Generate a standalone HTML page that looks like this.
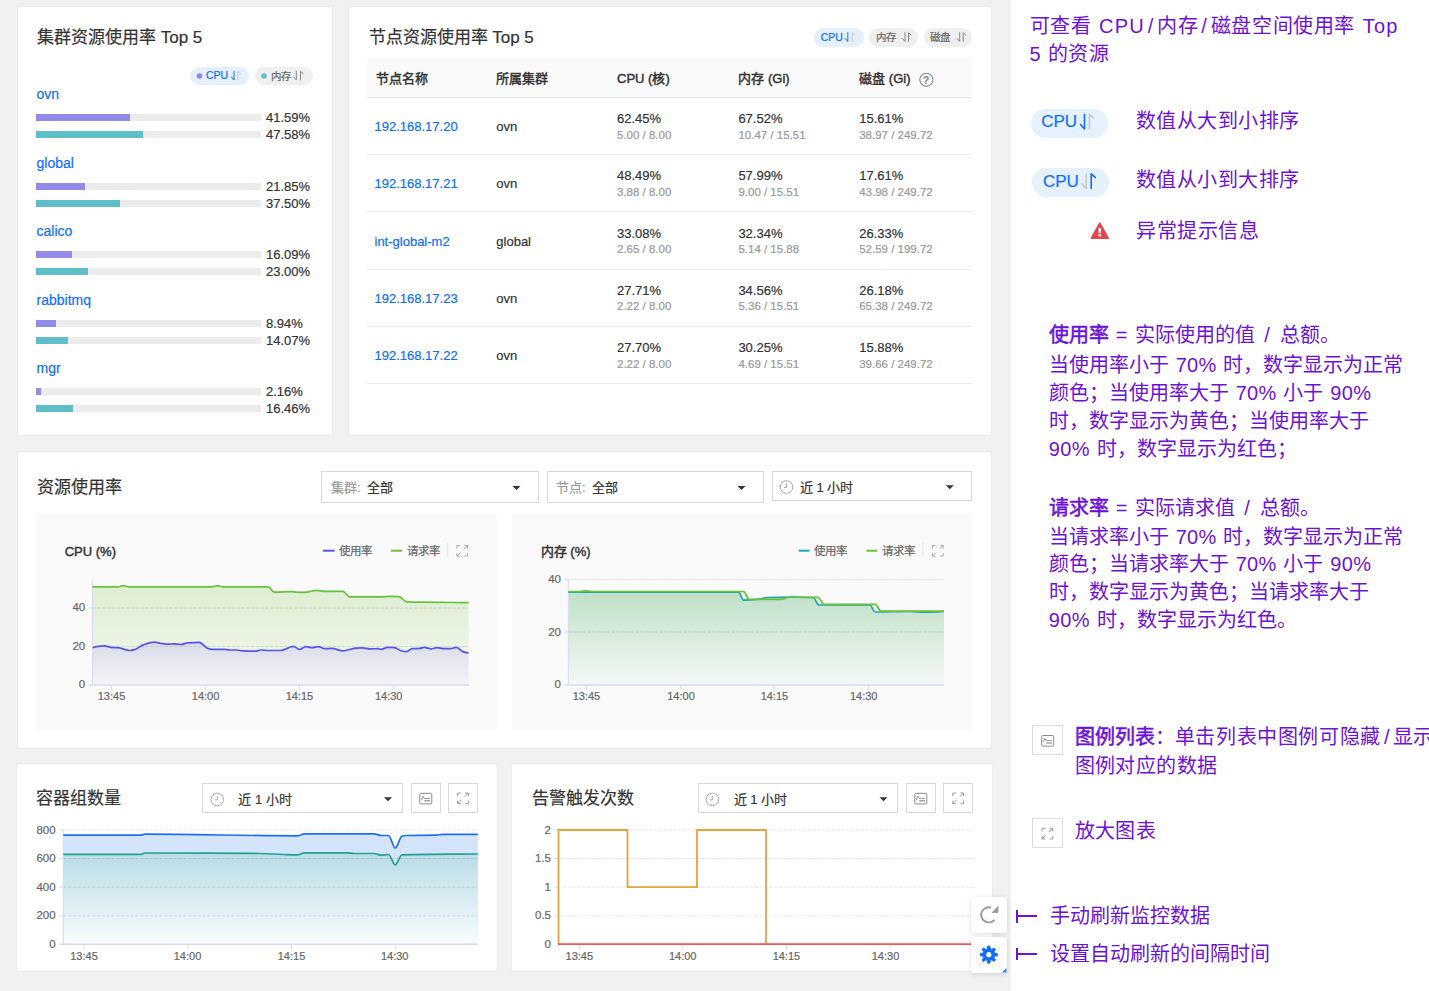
<!DOCTYPE html><html lang="zh-CN"><head><meta charset="utf-8"><style>
html,body{margin:0;padding:0;}
body{width:1429px;height:991px;overflow:hidden;position:relative;background:#f1f1f1;font-family:"Liberation Sans",sans-serif;}
.t{position:absolute;white-space:nowrap;-webkit-text-stroke:0.2px currentColor;}
.r{position:absolute;box-sizing:border-box;}
svg.ov{position:absolute;left:0;top:0;}
b{font-weight:normal;-webkit-text-stroke:0.55px currentColor;}
.l{letter-spacing:0.3px;word-spacing:1px;}
</style></head><body>

<div class="r" style="left:1011px;top:0px;width:418px;height:991px;background:#fff;"></div>
<div class="r" style="left:17px;top:6px;width:316px;height:430px;background:#fff;border:1px solid #eaeaea"></div>
<div class="r" style="left:348px;top:6px;width:644px;height:430px;background:#fff;border:1px solid #eaeaea"></div>
<div class="r" style="left:17px;top:451px;width:975px;height:298px;background:#fff;border:1px solid #eaeaea"></div>
<div class="r" style="left:16px;top:763px;width:482px;height:209px;background:#fff;border:1px solid #eaeaea"></div>
<div class="r" style="left:511px;top:763px;width:482px;height:209px;background:#fff;border:1px solid #eaeaea"></div>
<div class="t" style="left:37px;top:28.7px;font-size:17px;line-height:17px;color:#333;font-weight:normal;">集群资源使用率 Top 5</div>
<div class="r" style="left:190px;top:67px;width:59px;height:18px;background:#e6f0fd;border-radius:9px"></div>
<div class="t" style="left:206px;top:69.8px;font-size:10.5px;line-height:10.5px;color:#0f6ef5;font-weight:normal;">CPU</div>
<div class="r" style="left:255px;top:67px;width:58px;height:18px;background:#efefef;border-radius:9px"></div>
<div class="t" style="left:270.8px;top:70.5px;font-size:10.5px;line-height:10.5px;color:#666;font-weight:normal;">内存</div>
<div class="t" style="left:36.5px;top:87.2px;font-size:14px;line-height:14px;color:#0f6ef5;font-weight:normal;">ovn</div>
<div class="r" style="left:36px;top:114.0px;width:225px;height:7px;background:#ececec;"></div>
<div class="r" style="left:36px;top:114.0px;width:93.5775px;height:7px;background:#9289e9;"></div>
<div class="t" style="left:266px;top:111.0px;font-size:13px;line-height:13px;color:#333;font-weight:normal;">41.59%</div>
<div class="r" style="left:36px;top:131.0px;width:225px;height:7px;background:#ececec;"></div>
<div class="r" style="left:36px;top:131.0px;width:107.055px;height:7px;background:#5fbfc8;"></div>
<div class="t" style="left:266px;top:128.0px;font-size:13px;line-height:13px;color:#333;font-weight:normal;">47.58%</div>
<div class="t" style="left:36.5px;top:155.7px;font-size:14px;line-height:14px;color:#0f6ef5;font-weight:normal;">global</div>
<div class="r" style="left:36px;top:182.5px;width:225px;height:7px;background:#ececec;"></div>
<div class="r" style="left:36px;top:182.5px;width:49.1625px;height:7px;background:#9289e9;"></div>
<div class="t" style="left:266px;top:179.5px;font-size:13px;line-height:13px;color:#333;font-weight:normal;">21.85%</div>
<div class="r" style="left:36px;top:199.5px;width:225px;height:7px;background:#ececec;"></div>
<div class="r" style="left:36px;top:199.5px;width:84.375px;height:7px;background:#5fbfc8;"></div>
<div class="t" style="left:266px;top:196.5px;font-size:13px;line-height:13px;color:#333;font-weight:normal;">37.50%</div>
<div class="t" style="left:36.5px;top:224.2px;font-size:14px;line-height:14px;color:#0f6ef5;font-weight:normal;">calico</div>
<div class="r" style="left:36px;top:251.0px;width:225px;height:7px;background:#ececec;"></div>
<div class="r" style="left:36px;top:251.0px;width:36.2025px;height:7px;background:#9289e9;"></div>
<div class="t" style="left:266px;top:248.0px;font-size:13px;line-height:13px;color:#333;font-weight:normal;">16.09%</div>
<div class="r" style="left:36px;top:268.0px;width:225px;height:7px;background:#ececec;"></div>
<div class="r" style="left:36px;top:268.0px;width:51.75px;height:7px;background:#5fbfc8;"></div>
<div class="t" style="left:266px;top:265.0px;font-size:13px;line-height:13px;color:#333;font-weight:normal;">23.00%</div>
<div class="t" style="left:36.5px;top:292.7px;font-size:14px;line-height:14px;color:#0f6ef5;font-weight:normal;">rabbitmq</div>
<div class="r" style="left:36px;top:319.5px;width:225px;height:7px;background:#ececec;"></div>
<div class="r" style="left:36px;top:319.5px;width:20.115px;height:7px;background:#9289e9;"></div>
<div class="t" style="left:266px;top:316.5px;font-size:13px;line-height:13px;color:#333;font-weight:normal;">8.94%</div>
<div class="r" style="left:36px;top:336.5px;width:225px;height:7px;background:#ececec;"></div>
<div class="r" style="left:36px;top:336.5px;width:31.6575px;height:7px;background:#5fbfc8;"></div>
<div class="t" style="left:266px;top:333.5px;font-size:13px;line-height:13px;color:#333;font-weight:normal;">14.07%</div>
<div class="t" style="left:36.5px;top:361.2px;font-size:14px;line-height:14px;color:#0f6ef5;font-weight:normal;">mgr</div>
<div class="r" style="left:36px;top:388.0px;width:225px;height:7px;background:#ececec;"></div>
<div class="r" style="left:36px;top:388.0px;width:4.86px;height:7px;background:#9289e9;"></div>
<div class="t" style="left:266px;top:385.0px;font-size:13px;line-height:13px;color:#333;font-weight:normal;">2.16%</div>
<div class="r" style="left:36px;top:405.0px;width:225px;height:7px;background:#ececec;"></div>
<div class="r" style="left:36px;top:405.0px;width:37.035px;height:7px;background:#5fbfc8;"></div>
<div class="t" style="left:266px;top:402.0px;font-size:13px;line-height:13px;color:#333;font-weight:normal;">16.46%</div>
<div class="t" style="left:368.5px;top:28.7px;font-size:17px;line-height:17px;color:#333;font-weight:normal;">节点资源使用率 Top 5</div>
<div class="r" style="left:814px;top:28.3px;width:49.5px;height:18.7px;background:#e6f0fd;border-radius:9.5px"></div>
<div class="t" style="left:820.7px;top:31.5px;font-size:10.5px;line-height:10.5px;color:#0f6ef5;font-weight:normal;">CPU</div>
<div class="r" style="left:869.2px;top:28.3px;width:48.5px;height:18.7px;background:#efefef;border-radius:9.5px"></div>
<div class="t" style="left:876px;top:32px;font-size:10.5px;line-height:10.5px;color:#666;font-weight:normal;">内存</div>
<div class="r" style="left:923.7px;top:28.3px;width:48.5px;height:18.7px;background:#efefef;border-radius:9.5px"></div>
<div class="t" style="left:930.2px;top:32px;font-size:10.5px;line-height:10.5px;color:#666;font-weight:normal;">磁盘</div>
<div class="r" style="left:367px;top:58px;width:605px;height:40px;background:#fafafa;border-bottom:1px solid #e8e8e8"></div>
<div class="t" style="left:375.5px;top:71.5px;font-size:13px;line-height:13px;color:#333;font-weight:normal;-webkit-text-stroke:0.45px #333">节点名称</div>
<div class="t" style="left:496.3px;top:71.5px;font-size:13px;line-height:13px;color:#333;font-weight:normal;-webkit-text-stroke:0.45px #333">所属集群</div>
<div class="t" style="left:617px;top:71.5px;font-size:13px;line-height:13px;color:#333;font-weight:normal;-webkit-text-stroke:0.45px #333">CPU (核)</div>
<div class="t" style="left:738.4px;top:71.5px;font-size:13px;line-height:13px;color:#333;font-weight:normal;-webkit-text-stroke:0.45px #333">内存 (Gi)</div>
<div class="t" style="left:859.2px;top:71.5px;font-size:13px;line-height:13px;color:#333;font-weight:normal;-webkit-text-stroke:0.45px #333">磁盘 (Gi)</div>
<div class="t" style="left:922.8px;top:74.5px;font-size:10.5px;line-height:10.5px;color:#888;font-weight:bold;">?</div>
<div class="t" style="left:374.5px;top:120.2px;font-size:13px;line-height:13px;color:#0f6ef5;font-weight:normal;">192.168.17.20</div>
<div class="t" style="left:496.3px;top:120.2px;font-size:13px;line-height:13px;color:#333;font-weight:normal;">ovn</div>
<div class="t" style="left:617px;top:112.0px;font-size:13px;line-height:13px;color:#333;font-weight:normal;">62.45%</div>
<div class="t" style="left:617px;top:129.5px;font-size:11.5px;line-height:11.5px;color:#999;font-weight:normal;">5.00 / 8.00</div>
<div class="t" style="left:738.4px;top:112.0px;font-size:13px;line-height:13px;color:#333;font-weight:normal;">67.52%</div>
<div class="t" style="left:738.4px;top:129.5px;font-size:11.5px;line-height:11.5px;color:#999;font-weight:normal;">10.47 / 15.51</div>
<div class="t" style="left:859.2px;top:112.0px;font-size:13px;line-height:13px;color:#333;font-weight:normal;">15.61%</div>
<div class="t" style="left:859.2px;top:129.5px;font-size:11.5px;line-height:11.5px;color:#999;font-weight:normal;">38.97 / 249.72</div>
<div class="r" style="left:367px;top:154.0px;width:605px;height:1px;background:#ebebeb;"></div>
<div class="t" style="left:374.5px;top:177.45px;font-size:13px;line-height:13px;color:#0f6ef5;font-weight:normal;">192.168.17.21</div>
<div class="t" style="left:496.3px;top:177.45px;font-size:13px;line-height:13px;color:#333;font-weight:normal;">ovn</div>
<div class="t" style="left:617px;top:169.25px;font-size:13px;line-height:13px;color:#333;font-weight:normal;">48.49%</div>
<div class="t" style="left:617px;top:186.75px;font-size:11.5px;line-height:11.5px;color:#999;font-weight:normal;">3.88 / 8.00</div>
<div class="t" style="left:738.4px;top:169.25px;font-size:13px;line-height:13px;color:#333;font-weight:normal;">57.99%</div>
<div class="t" style="left:738.4px;top:186.75px;font-size:11.5px;line-height:11.5px;color:#999;font-weight:normal;">9.00 / 15.51</div>
<div class="t" style="left:859.2px;top:169.25px;font-size:13px;line-height:13px;color:#333;font-weight:normal;">17.61%</div>
<div class="t" style="left:859.2px;top:186.75px;font-size:11.5px;line-height:11.5px;color:#999;font-weight:normal;">43.98 / 249.72</div>
<div class="r" style="left:367px;top:211.25px;width:605px;height:1px;background:#ebebeb;"></div>
<div class="t" style="left:374.5px;top:234.7px;font-size:13px;line-height:13px;color:#0f6ef5;font-weight:normal;">int-global-m2</div>
<div class="t" style="left:496.3px;top:234.7px;font-size:13px;line-height:13px;color:#333;font-weight:normal;">global</div>
<div class="t" style="left:617px;top:226.5px;font-size:13px;line-height:13px;color:#333;font-weight:normal;">33.08%</div>
<div class="t" style="left:617px;top:244.0px;font-size:11.5px;line-height:11.5px;color:#999;font-weight:normal;">2.65 / 8.00</div>
<div class="t" style="left:738.4px;top:226.5px;font-size:13px;line-height:13px;color:#333;font-weight:normal;">32.34%</div>
<div class="t" style="left:738.4px;top:244.0px;font-size:11.5px;line-height:11.5px;color:#999;font-weight:normal;">5.14 / 15.88</div>
<div class="t" style="left:859.2px;top:226.5px;font-size:13px;line-height:13px;color:#333;font-weight:normal;">26.33%</div>
<div class="t" style="left:859.2px;top:244.0px;font-size:11.5px;line-height:11.5px;color:#999;font-weight:normal;">52.59 / 199.72</div>
<div class="r" style="left:367px;top:268.5px;width:605px;height:1px;background:#ebebeb;"></div>
<div class="t" style="left:374.5px;top:291.95px;font-size:13px;line-height:13px;color:#0f6ef5;font-weight:normal;">192.168.17.23</div>
<div class="t" style="left:496.3px;top:291.95px;font-size:13px;line-height:13px;color:#333;font-weight:normal;">ovn</div>
<div class="t" style="left:617px;top:283.75px;font-size:13px;line-height:13px;color:#333;font-weight:normal;">27.71%</div>
<div class="t" style="left:617px;top:301.25px;font-size:11.5px;line-height:11.5px;color:#999;font-weight:normal;">2.22 / 8.00</div>
<div class="t" style="left:738.4px;top:283.75px;font-size:13px;line-height:13px;color:#333;font-weight:normal;">34.56%</div>
<div class="t" style="left:738.4px;top:301.25px;font-size:11.5px;line-height:11.5px;color:#999;font-weight:normal;">5.36 / 15.51</div>
<div class="t" style="left:859.2px;top:283.75px;font-size:13px;line-height:13px;color:#333;font-weight:normal;">26.18%</div>
<div class="t" style="left:859.2px;top:301.25px;font-size:11.5px;line-height:11.5px;color:#999;font-weight:normal;">65.38 / 249.72</div>
<div class="r" style="left:367px;top:325.75px;width:605px;height:1px;background:#ebebeb;"></div>
<div class="t" style="left:374.5px;top:349.2px;font-size:13px;line-height:13px;color:#0f6ef5;font-weight:normal;">192.168.17.22</div>
<div class="t" style="left:496.3px;top:349.2px;font-size:13px;line-height:13px;color:#333;font-weight:normal;">ovn</div>
<div class="t" style="left:617px;top:341.0px;font-size:13px;line-height:13px;color:#333;font-weight:normal;">27.70%</div>
<div class="t" style="left:617px;top:358.5px;font-size:11.5px;line-height:11.5px;color:#999;font-weight:normal;">2.22 / 8.00</div>
<div class="t" style="left:738.4px;top:341.0px;font-size:13px;line-height:13px;color:#333;font-weight:normal;">30.25%</div>
<div class="t" style="left:738.4px;top:358.5px;font-size:11.5px;line-height:11.5px;color:#999;font-weight:normal;">4.69 / 15.51</div>
<div class="t" style="left:859.2px;top:341.0px;font-size:13px;line-height:13px;color:#333;font-weight:normal;">15.88%</div>
<div class="t" style="left:859.2px;top:358.5px;font-size:11.5px;line-height:11.5px;color:#999;font-weight:normal;">39.66 / 249.72</div>
<div class="r" style="left:367px;top:383.0px;width:605px;height:1px;background:#ebebeb;"></div>
<div class="t" style="left:37px;top:478.7px;font-size:17px;line-height:17px;color:#333;font-weight:normal;">资源使用率</div>
<div class="r" style="left:321.4px;top:471px;width:217.5px;height:31.5px;background:#fff;border:1px solid #d9d9d9"></div>
<div class="t" style="left:330.9px;top:481px;font-size:13px;line-height:13px;color:#999;font-weight:normal;">集群:</div>
<div class="t" style="left:367px;top:481px;font-size:13px;line-height:13px;color:#333;font-weight:normal;">全部</div>
<div class="r" style="left:546.6px;top:471px;width:217.5px;height:31.5px;background:#fff;border:1px solid #d9d9d9"></div>
<div class="t" style="left:556.1px;top:481px;font-size:13px;line-height:13px;color:#999;font-weight:normal;">节点:</div>
<div class="t" style="left:592px;top:481px;font-size:13px;line-height:13px;color:#333;font-weight:normal;">全部</div>
<div class="r" style="left:771.8px;top:471.2px;width:200px;height:29.6px;background:#fff;border:1px solid #d9d9d9"></div>
<div class="t" style="left:800px;top:480.7px;font-size:13px;line-height:13px;color:#333;font-weight:normal;">近 1 小时</div>
<div class="r" style="left:36px;top:514px;width:461px;height:216px;background:#fafafa;"></div>
<div class="r" style="left:512px;top:514px;width:460px;height:216px;background:#fafafa;"></div>
<div class="t" style="left:36.3px;top:790.2px;font-size:17px;line-height:17px;color:#333;font-weight:normal;">容器组数量</div>
<div class="r" style="left:202.2px;top:783px;width:200.6px;height:30px;background:#fff;border:1px solid #d9d9d9"></div>
<div class="t" style="left:238.3px;top:792.5px;font-size:13px;line-height:13px;color:#333;font-weight:normal;">近 1 小时</div>
<div class="r" style="left:410.7px;top:783px;width:30px;height:30px;background:#fff;border:1px solid #d9d9d9"></div>
<div class="r" style="left:448px;top:783px;width:30px;height:30px;background:#fff;border:1px solid #d9d9d9"></div>
<div class="t" style="left:531.8px;top:790.2px;font-size:17px;line-height:17px;color:#333;font-weight:normal;">告警触发次数</div>
<div class="r" style="left:697.6px;top:783px;width:200px;height:30px;background:#fff;border:1px solid #d9d9d9"></div>
<div class="t" style="left:733.7px;top:792.5px;font-size:13px;line-height:13px;color:#333;font-weight:normal;">近 1 小时</div>
<div class="r" style="left:905.7px;top:783px;width:30px;height:30px;background:#fff;border:1px solid #d9d9d9"></div>
<div class="r" style="left:943.2px;top:783px;width:30px;height:30px;background:#fff;border:1px solid #d9d9d9"></div>
<div class="t" style="left:1029.5px;top:15.5px;font-size:20px;line-height:20px;color:#6c12d6;font-weight:normal;-webkit-text-stroke:0;letter-spacing:0.6px">可查看<span class="l" style="letter-spacing:1.2px;word-spacing:1px"> CPU<span style="margin:0 2.8px">/</span></span>内存<span class="l" style="letter-spacing:1.2px;word-spacing:1px"><span style="margin:0 2.8px">/</span></span>磁盘空间使用率<span class="l" style="letter-spacing:1.2px;word-spacing:1px"> Top</span></div>
<div class="t" style="left:1029.5px;top:43.5px;font-size:20px;line-height:20px;color:#6c12d6;font-weight:normal;-webkit-text-stroke:0;letter-spacing:0.6px"><span class="l">5 </span>的资源</div>
<div class="r" style="left:1030.6px;top:108.7px;width:77px;height:29px;background:#e6f1ff;border-radius:14.5px"></div>
<div class="t" style="left:1041.2px;top:113.1px;font-size:17px;line-height:17px;color:#0f6ef5;font-weight:normal;">CPU</div>
<div class="t" style="left:1136px;top:111px;font-size:20px;line-height:20px;color:#6c12d6;font-weight:normal;-webkit-text-stroke:0;letter-spacing:0.45px">数值从大到小排序</div>
<div class="r" style="left:1032.3px;top:168.2px;width:77px;height:28.5px;background:#e6f1ff;border-radius:14.5px"></div>
<div class="t" style="left:1043px;top:172.6px;font-size:17px;line-height:17px;color:#0f6ef5;font-weight:normal;">CPU</div>
<div class="t" style="left:1136px;top:170px;font-size:20px;line-height:20px;color:#6c12d6;font-weight:normal;-webkit-text-stroke:0;letter-spacing:0.45px">数值从小到大排序</div>
<div class="t" style="left:1136px;top:221px;font-size:20px;line-height:20px;color:#6c12d6;font-weight:normal;-webkit-text-stroke:0;letter-spacing:0.5px">异常提示信息</div>
<div class="t" style="left:1048.8px;top:325px;font-size:20px;line-height:20px;color:#6c12d6;font-weight:normal;-webkit-text-stroke:0;"><b>使用率</b><span class="l"> = </span>实际使用的值<span class="l"> <span style="margin:0 2.8px">/</span> </span>总额。</div>
<div class="t" style="left:1048.8px;top:355px;font-size:20px;line-height:20px;color:#6c12d6;font-weight:normal;-webkit-text-stroke:0;">当使用率小于<span class="l"> 70% </span>时，数字显示为正常</div>
<div class="t" style="left:1048.8px;top:383px;font-size:20px;line-height:20px;color:#6c12d6;font-weight:normal;-webkit-text-stroke:0;">颜色；当使用率大于<span class="l"> 70% </span>小于<span class="l"> 90%</span></div>
<div class="t" style="left:1048.8px;top:411px;font-size:20px;line-height:20px;color:#6c12d6;font-weight:normal;-webkit-text-stroke:0;">时，数字显示为黄色；当使用率大于</div>
<div class="t" style="left:1048.8px;top:439px;font-size:20px;line-height:20px;color:#6c12d6;font-weight:normal;-webkit-text-stroke:0;"><span class="l">90% </span>时，数字显示为红色；</div>
<div class="t" style="left:1048.8px;top:498px;font-size:20px;line-height:20px;color:#6c12d6;font-weight:normal;-webkit-text-stroke:0;"><b>请求率</b><span class="l"> = </span>实际请求值<span class="l"> <span style="margin:0 2.8px">/</span> </span>总额。</div>
<div class="t" style="left:1048.8px;top:527px;font-size:20px;line-height:20px;color:#6c12d6;font-weight:normal;-webkit-text-stroke:0;">当请求率小于<span class="l"> 70% </span>时，数字显示为正常</div>
<div class="t" style="left:1048.8px;top:554px;font-size:20px;line-height:20px;color:#6c12d6;font-weight:normal;-webkit-text-stroke:0;">颜色；当请求率大于<span class="l"> 70% </span>小于<span class="l"> 90%</span></div>
<div class="t" style="left:1048.8px;top:582px;font-size:20px;line-height:20px;color:#6c12d6;font-weight:normal;-webkit-text-stroke:0;">时，数字显示为黄色；当请求率大于</div>
<div class="t" style="left:1048.8px;top:610px;font-size:20px;line-height:20px;color:#6c12d6;font-weight:normal;-webkit-text-stroke:0;"><span class="l">90% </span>时，数字显示为红色。</div>
<div class="r" style="left:1032.3px;top:725.3px;width:30.5px;height:30.2px;background:#fff;border:1px solid #ddd"></div>
<div class="t" style="left:1074.6px;top:727px;font-size:20px;line-height:20px;color:#6c12d6;font-weight:normal;-webkit-text-stroke:0;"><b>图例列表</b>：<span style="letter-spacing:0.65px">单击列表中图例可隐藏</span><span class="l"><span style="margin:0 2.8px">/</span></span>显示</div>
<div class="t" style="left:1074.6px;top:755.5px;font-size:20px;line-height:20px;color:#6c12d6;font-weight:normal;-webkit-text-stroke:0;letter-spacing:0.4px">图例对应的数据</div>
<div class="r" style="left:1032.3px;top:818.2px;width:30.5px;height:30.2px;background:#fff;border:1px solid #ddd"></div>
<div class="t" style="left:1074.6px;top:821px;font-size:20px;line-height:20px;color:#6c12d6;font-weight:normal;-webkit-text-stroke:0;letter-spacing:0.4px">放大图表</div>
<div class="r" style="left:1016px;top:910.0px;width:2.2px;height:12.6px;background:#6c12d6;"></div>
<div class="r" style="left:1016px;top:915.4px;width:21.4px;height:1.8px;background:#6c12d6;"></div>
<div class="t" style="left:1050.1px;top:906.3px;font-size:20px;line-height:20px;color:#6c12d6;font-weight:normal;-webkit-text-stroke:0;">手动刷新监控数据</div>
<div class="r" style="left:1016px;top:947.7px;width:2.2px;height:12.6px;background:#6c12d6;"></div>
<div class="r" style="left:1016px;top:953.1px;width:21.4px;height:1.8px;background:#6c12d6;"></div>
<div class="t" style="left:1050.1px;top:944px;font-size:20px;line-height:20px;color:#6c12d6;font-weight:normal;-webkit-text-stroke:0;">设置自动刷新的间隔时间</div>
<div class="t" style="left:64.7px;top:545px;font-size:13px;line-height:13px;color:#333;font-weight:normal;-webkit-text-stroke:0.45px #333">CPU (%)</div>
<div class="t" style="left:339px;top:545.5px;font-size:11.5px;line-height:11.5px;color:#666;font-weight:normal;">使用率</div>
<div class="t" style="left:406.6px;top:545.5px;font-size:11.5px;line-height:11.5px;color:#666;font-weight:normal;">请求率</div>
<div class="t" style="right:1343.8px;top:602.2px;font-size:11.5px;line-height:11.5px;color:#666;text-align:right;">40</div>
<div class="t" style="right:1343.8px;top:640.5px;font-size:11.5px;line-height:11.5px;color:#666;text-align:right;">20</div>
<div class="t" style="right:1343.8px;top:678.9px;font-size:11.5px;line-height:11.5px;color:#666;text-align:right;">0</div>
<div class="t" style="left:61.5px;width:100px;top:691px;font-size:11px;line-height:11px;color:#666;text-align:center;">13:45</div>
<div class="t" style="left:155.6px;width:100px;top:691px;font-size:11px;line-height:11px;color:#666;text-align:center;">14:00</div>
<div class="t" style="left:249.39999999999998px;width:100px;top:691px;font-size:11px;line-height:11px;color:#666;text-align:center;">14:15</div>
<div class="t" style="left:338.7px;width:100px;top:691px;font-size:11px;line-height:11px;color:#666;text-align:center;">14:30</div>
<div class="t" style="left:540.7px;top:544.5px;font-size:13px;line-height:13px;color:#333;font-weight:normal;-webkit-text-stroke:0.45px #333">内存 (%)</div>
<div class="t" style="left:813.7px;top:545.5px;font-size:11.5px;line-height:11.5px;color:#666;font-weight:normal;">使用率</div>
<div class="t" style="left:881.9px;top:545.5px;font-size:11.5px;line-height:11.5px;color:#666;font-weight:normal;">请求率</div>
<div class="t" style="right:868px;top:574.2px;font-size:11.5px;line-height:11.5px;color:#666;text-align:right;">40</div>
<div class="t" style="right:868px;top:626.5px;font-size:11.5px;line-height:11.5px;color:#666;text-align:right;">20</div>
<div class="t" style="right:868px;top:678.9px;font-size:11.5px;line-height:11.5px;color:#666;text-align:right;">0</div>
<div class="t" style="left:536.4px;width:100px;top:691px;font-size:11px;line-height:11px;color:#666;text-align:center;">13:45</div>
<div class="t" style="left:631px;width:100px;top:691px;font-size:11px;line-height:11px;color:#666;text-align:center;">14:00</div>
<div class="t" style="left:724.4px;width:100px;top:691px;font-size:11px;line-height:11px;color:#666;text-align:center;">14:15</div>
<div class="t" style="left:813.7px;width:100px;top:691px;font-size:11px;line-height:11px;color:#666;text-align:center;">14:30</div>
<div class="t" style="right:1373.4px;top:824.5px;font-size:11.5px;line-height:11.5px;color:#666;text-align:right;">800</div>
<div class="t" style="right:1373.4px;top:853.0px;font-size:11.5px;line-height:11.5px;color:#666;text-align:right;">600</div>
<div class="t" style="right:1373.4px;top:881.7px;font-size:11.5px;line-height:11.5px;color:#666;text-align:right;">400</div>
<div class="t" style="right:1373.4px;top:910.3px;font-size:11.5px;line-height:11.5px;color:#666;text-align:right;">200</div>
<div class="t" style="right:1373.4px;top:938.7px;font-size:11.5px;line-height:11.5px;color:#666;text-align:right;">0</div>
<div class="t" style="left:34px;width:100px;top:951px;font-size:11px;line-height:11px;color:#666;text-align:center;">13:45</div>
<div class="t" style="left:137.5px;width:100px;top:951px;font-size:11px;line-height:11px;color:#666;text-align:center;">14:00</div>
<div class="t" style="left:241.5px;width:100px;top:951px;font-size:11px;line-height:11px;color:#666;text-align:center;">14:15</div>
<div class="t" style="left:344.7px;width:100px;top:951px;font-size:11px;line-height:11px;color:#666;text-align:center;">14:30</div>
<div class="t" style="right:878px;top:824.5px;font-size:11.5px;line-height:11.5px;color:#666;text-align:right;">2</div>
<div class="t" style="right:878px;top:853.0px;font-size:11.5px;line-height:11.5px;color:#666;text-align:right;">1.5</div>
<div class="t" style="right:878px;top:881.7px;font-size:11.5px;line-height:11.5px;color:#666;text-align:right;">1</div>
<div class="t" style="right:878px;top:910.3px;font-size:11.5px;line-height:11.5px;color:#666;text-align:right;">0.5</div>
<div class="t" style="right:878px;top:938.7px;font-size:11.5px;line-height:11.5px;color:#666;text-align:right;">0</div>
<div class="t" style="left:529.3px;width:100px;top:951px;font-size:11px;line-height:11px;color:#666;text-align:center;">13:45</div>
<div class="t" style="left:632.7px;width:100px;top:951px;font-size:11px;line-height:11px;color:#666;text-align:center;">14:00</div>
<div class="t" style="left:736.4px;width:100px;top:951px;font-size:11px;line-height:11px;color:#666;text-align:center;">14:15</div>
<div class="t" style="left:835.5px;width:100px;top:951px;font-size:11px;line-height:11px;color:#666;text-align:center;">14:30</div>
<svg class="ov" width="1429" height="991" viewBox="0 0 1429 991"><circle cx="199.5" cy="76" r="2.8" fill="#9388e8"/><path d="M234 71.3V80L231.4 77.01" fill="none" stroke="#0f6ef5" stroke-width="1" stroke-linecap="round" stroke-linejoin="round"/><path d="M237.8 80V71.3L240.4 73.64" fill="none" stroke="#c8c8c8" stroke-width="1" stroke-linecap="round" stroke-linejoin="round"/><circle cx="264" cy="76" r="2.8" fill="#5ebfc8"/><path d="M296.3 71.3V80L293.7 77.01" fill="none" stroke="#888" stroke-width="1" stroke-linecap="round" stroke-linejoin="round"/><path d="M300.5 80V71.3L303.1 73.64" fill="none" stroke="#888" stroke-width="1" stroke-linecap="round" stroke-linejoin="round"/><path d="M847.8 32.7V41.5L845.1999999999999 38.51" fill="none" stroke="#0f6ef5" stroke-width="1" stroke-linecap="round" stroke-linejoin="round"/><path d="M852.2 41.5V32.7L854.8000000000001 35.040000000000006" fill="none" stroke="#c8c8c8" stroke-width="1" stroke-linecap="round" stroke-linejoin="round"/><path d="M905 32.7V41.5L902.4 38.51" fill="none" stroke="#888" stroke-width="1" stroke-linecap="round" stroke-linejoin="round"/><path d="M908.5 41.5V32.7L911.1 35.040000000000006" fill="none" stroke="#888" stroke-width="1" stroke-linecap="round" stroke-linejoin="round"/><path d="M959.7 32.7V41.5L957.1 38.51" fill="none" stroke="#888" stroke-width="1" stroke-linecap="round" stroke-linejoin="round"/><path d="M963.2 41.5V32.7L965.8000000000001 35.040000000000006" fill="none" stroke="#888" stroke-width="1" stroke-linecap="round" stroke-linejoin="round"/><circle cx="926.4" cy="79.8" r="6.6" fill="none" stroke="#888" stroke-width="1.1"/><path d="M512.5 485.95h8l-4 4z" fill="#333"/><path d="M737.5 485.95h8l-4 4z" fill="#333"/><circle cx="786.5" cy="487" r="6.3" fill="none" stroke="#aaa" stroke-width="1"/><path d="M786.5 483.5V487.5H784.0" fill="none" stroke="#aaa" stroke-width="1"/><path d="M945.8 485.2h8l-4 4z" fill="#333"/><circle cx="217.3" cy="799.4" r="6.3" fill="none" stroke="#aaa" stroke-width="1"/><path d="M217.3 795.9V799.9H214.8" fill="none" stroke="#aaa" stroke-width="1"/><path d="M384 797.2h8l-4 4z" fill="#333"/><circle cx="712.4" cy="799.4" r="6.3" fill="none" stroke="#aaa" stroke-width="1"/><path d="M712.4 795.9V799.9H709.9" fill="none" stroke="#aaa" stroke-width="1"/><path d="M879.5 797.2h8l-4 4z" fill="#333"/><path d="M1084.5 114.3V129L1080.5 124.4" fill="none" stroke="#0f6ef5" stroke-width="1.6" stroke-linecap="round" stroke-linejoin="round"/><path d="M1089.5 129V114.3L1093.5 117.89999999999999" fill="none" stroke="#c8c8c8" stroke-width="1.6" stroke-linecap="round" stroke-linejoin="round"/><path d="M1086.2 173.8V188.5L1082.2 183.9" fill="none" stroke="#c8c8c8" stroke-width="1.6" stroke-linecap="round" stroke-linejoin="round"/><path d="M1091.2 188.5V173.8L1095.2 177.4" fill="none" stroke="#0f6ef5" stroke-width="1.6" stroke-linecap="round" stroke-linejoin="round"/><path d="M1099.8 223.2L1108.2 238.2H1091.4Z" fill="#e0484e" stroke="#e0484e" stroke-width="1.6" stroke-linejoin="round"/><rect x="1098.6" y="228" width="2.4" height="4.8" fill="#fff"/><rect x="1098.6" y="234" width="2.4" height="2.3" fill="#fff"/><defs>
<linearGradient id="g1" x1="0" y1="0" x2="0" y2="1"><stop offset="0" stop-color="#deedd2"/><stop offset="1" stop-color="#f3f8ef"/></linearGradient>
<linearGradient id="p1" x1="0" y1="0" x2="0" y2="1"><stop offset="0" stop-color="#d9dcea"/><stop offset="1" stop-color="#f4f4f8"/></linearGradient>
<linearGradient id="g2" x1="0" y1="0" x2="0" y2="1"><stop offset="0" stop-color="#bfe0c8"/><stop offset="1" stop-color="#f3f8f4"/></linearGradient>
<linearGradient id="t4" x1="0" y1="0" x2="0" y2="1"><stop offset="0" stop-color="#b9dce6"/><stop offset="1" stop-color="#f8fcfd"/></linearGradient>
</defs><path d="M323 550.7h11.6" stroke="#5b53e6" stroke-width="2"/><path d="M391 550.7h11" stroke="#67c23a" stroke-width="2"/><path d="M447.7 543v14" stroke="#e3e3e3" stroke-width="1"/><path d="M456.8 548.6V545.5H459.90000000000003 M467.5 548.6V545.5H464.4 M467.4 545.6L463.8 549.2 M467.5 553.1V556.2H464.4 M456.8 553.1V556.2H459.90000000000003 M456.90000000000003 556.1L460.5 552.5" fill="none" stroke="#aaa" stroke-width="1"/><path d="M92.50 586.80 C101.00 586.80 109.50 586.80 118.00 586.80 C119.87 586.80 121.73 585.70 123.60 585.70 C125.40 585.70 127.20 586.80 129.00 586.80 C156.67 586.80 184.33 586.80 212.00 586.80 C213.80 586.80 215.60 585.70 217.40 585.70 C219.27 585.70 221.13 586.80 223.00 586.80 C238.13 586.80 253.27 586.80 268.40 586.80 C270.27 586.80 272.13 592.10 274.00 592.10 C280.20 592.10 286.40 591.70 292.60 591.70 C294.93 591.70 297.27 592.40 299.60 592.40 C301.93 592.40 304.27 592.26 306.60 592.10 C309.87 591.88 313.13 590.30 316.40 590.30 C319.20 590.30 322.00 591.30 324.80 591.30 C330.87 591.30 336.93 591.30 343.00 591.30 C345.10 591.30 347.20 596.90 349.30 596.90 C359.80 596.90 370.30 596.90 380.80 596.90 C383.60 596.90 386.40 596.30 389.20 596.30 C392.47 596.30 395.73 596.40 399.00 596.60 C401.57 596.76 404.13 601.78 406.70 601.90 C411.13 602.11 415.57 602.14 420.00 602.20 C436.20 602.41 452.40 602.47 468.60 602.60 L468.60 685 L92.50 685 Z" fill="url(#g1)"/><path d="M92.80 647.70 C94.67 647.23 96.53 646.49 98.40 646.30 C100.50 646.08 102.60 645.90 104.70 645.90 C106.80 645.90 108.90 647.25 111.00 647.40 C113.33 647.57 115.67 647.54 118.00 647.70 C121.97 647.97 125.93 650.50 129.90 650.50 C131.53 650.50 133.17 649.97 134.80 649.50 C137.60 648.70 140.40 645.88 143.20 644.90 C146.93 643.60 150.67 642.10 154.40 642.10 C156.73 642.10 159.07 643.19 161.40 643.50 C163.73 643.81 166.07 644.20 168.40 644.20 C170.27 644.20 172.13 643.80 174.00 643.80 C176.33 643.80 178.67 644.50 181.00 644.50 C183.33 644.50 185.67 642.95 188.00 642.80 C191.73 642.55 195.47 642.40 199.20 642.40 C202.00 642.40 204.80 647.45 207.60 648.40 C209.00 648.87 210.40 649.40 211.80 649.40 C216.00 649.40 220.20 649.40 224.40 649.40 C226.27 649.40 228.13 650.00 230.00 650.00 C232.33 650.00 234.67 650.00 237.00 650.00 C238.87 650.00 240.73 650.81 242.60 650.90 C246.80 651.09 251.00 651.20 255.20 651.20 C257.03 651.20 258.87 650.00 260.70 650.00 C263.50 650.00 266.30 650.50 269.10 650.50 C272.83 650.50 276.57 650.50 280.30 650.50 C282.07 650.50 283.83 649.64 285.60 649.10 C288.17 648.32 290.73 646.30 293.30 646.30 C295.40 646.30 297.50 649.50 299.60 649.50 C301.70 649.50 303.80 646.60 305.90 646.60 C308.00 646.60 310.10 647.70 312.20 647.70 C314.30 647.70 316.40 646.70 318.50 646.70 C320.60 646.70 322.70 648.70 324.80 648.70 C327.13 648.70 329.47 648.40 331.80 648.40 C335.53 648.40 339.27 650.90 343.00 650.90 C347.20 650.90 351.40 648.38 355.60 648.10 C357.93 647.94 360.27 647.80 362.60 647.80 C364.93 647.80 367.27 648.80 369.60 648.80 C372.40 648.80 375.20 648.70 378.00 648.70 C378.93 648.70 379.87 649.40 380.80 649.40 C383.13 649.40 385.47 647.30 387.80 647.30 C390.13 647.30 392.47 647.45 394.80 647.70 C396.67 647.90 398.53 649.94 400.40 650.50 C402.27 651.06 404.13 651.70 406.00 651.70 C408.10 651.70 410.20 648.86 412.30 648.70 C414.87 648.51 417.43 648.58 420.00 648.40 C421.40 648.30 422.80 647.40 424.20 647.40 C426.53 647.40 428.87 648.80 431.20 648.80 C433.07 648.80 434.93 647.70 436.80 647.70 C439.10 647.70 441.40 648.70 443.70 648.70 C446.03 648.70 448.37 648.70 450.70 648.70 C452.57 648.70 454.43 647.30 456.30 647.30 C458.63 647.30 460.97 651.18 463.30 651.90 C465.07 652.44 466.83 652.63 468.60 653.00 L468.60 685 L92.80 685 Z" fill="url(#p1)"/><path d="M92.5 608H468.6" stroke="rgba(0,0,0,0.1)" stroke-width="1" stroke-dasharray="3.5 1.3"/><path d="M88.5 608H92.5" stroke="#d5dbf3" stroke-width="1"/><path d="M92.5 646.5H468.6" stroke="rgba(0,0,0,0.1)" stroke-width="1" stroke-dasharray="3.5 1.3"/><path d="M88.5 646.5H92.5" stroke="#d5dbf3" stroke-width="1"/><path d="M92.5 579.7V685.5" stroke="#d5dbf3" stroke-width="1"/><path d="M88.5 685H468.6" stroke="#d5dbf3" stroke-width="1.5"/><path d="M111.5 685V690" stroke="#d5dbf3" stroke-width="1"/><path d="M205.6 685V690" stroke="#d5dbf3" stroke-width="1"/><path d="M299.6 685V690" stroke="#d5dbf3" stroke-width="1"/><path d="M393.3 685V690" stroke="#d5dbf3" stroke-width="1"/><path d="M92.50 586.80 C101.00 586.80 109.50 586.80 118.00 586.80 C119.87 586.80 121.73 585.70 123.60 585.70 C125.40 585.70 127.20 586.80 129.00 586.80 C156.67 586.80 184.33 586.80 212.00 586.80 C213.80 586.80 215.60 585.70 217.40 585.70 C219.27 585.70 221.13 586.80 223.00 586.80 C238.13 586.80 253.27 586.80 268.40 586.80 C270.27 586.80 272.13 592.10 274.00 592.10 C280.20 592.10 286.40 591.70 292.60 591.70 C294.93 591.70 297.27 592.40 299.60 592.40 C301.93 592.40 304.27 592.26 306.60 592.10 C309.87 591.88 313.13 590.30 316.40 590.30 C319.20 590.30 322.00 591.30 324.80 591.30 C330.87 591.30 336.93 591.30 343.00 591.30 C345.10 591.30 347.20 596.90 349.30 596.90 C359.80 596.90 370.30 596.90 380.80 596.90 C383.60 596.90 386.40 596.30 389.20 596.30 C392.47 596.30 395.73 596.40 399.00 596.60 C401.57 596.76 404.13 601.78 406.70 601.90 C411.13 602.11 415.57 602.14 420.00 602.20 C436.20 602.41 452.40 602.47 468.60 602.60" fill="none" stroke="#67c23a" stroke-width="1.7" stroke-linejoin="round"/><path d="M92.80 647.70 C94.67 647.23 96.53 646.49 98.40 646.30 C100.50 646.08 102.60 645.90 104.70 645.90 C106.80 645.90 108.90 647.25 111.00 647.40 C113.33 647.57 115.67 647.54 118.00 647.70 C121.97 647.97 125.93 650.50 129.90 650.50 C131.53 650.50 133.17 649.97 134.80 649.50 C137.60 648.70 140.40 645.88 143.20 644.90 C146.93 643.60 150.67 642.10 154.40 642.10 C156.73 642.10 159.07 643.19 161.40 643.50 C163.73 643.81 166.07 644.20 168.40 644.20 C170.27 644.20 172.13 643.80 174.00 643.80 C176.33 643.80 178.67 644.50 181.00 644.50 C183.33 644.50 185.67 642.95 188.00 642.80 C191.73 642.55 195.47 642.40 199.20 642.40 C202.00 642.40 204.80 647.45 207.60 648.40 C209.00 648.87 210.40 649.40 211.80 649.40 C216.00 649.40 220.20 649.40 224.40 649.40 C226.27 649.40 228.13 650.00 230.00 650.00 C232.33 650.00 234.67 650.00 237.00 650.00 C238.87 650.00 240.73 650.81 242.60 650.90 C246.80 651.09 251.00 651.20 255.20 651.20 C257.03 651.20 258.87 650.00 260.70 650.00 C263.50 650.00 266.30 650.50 269.10 650.50 C272.83 650.50 276.57 650.50 280.30 650.50 C282.07 650.50 283.83 649.64 285.60 649.10 C288.17 648.32 290.73 646.30 293.30 646.30 C295.40 646.30 297.50 649.50 299.60 649.50 C301.70 649.50 303.80 646.60 305.90 646.60 C308.00 646.60 310.10 647.70 312.20 647.70 C314.30 647.70 316.40 646.70 318.50 646.70 C320.60 646.70 322.70 648.70 324.80 648.70 C327.13 648.70 329.47 648.40 331.80 648.40 C335.53 648.40 339.27 650.90 343.00 650.90 C347.20 650.90 351.40 648.38 355.60 648.10 C357.93 647.94 360.27 647.80 362.60 647.80 C364.93 647.80 367.27 648.80 369.60 648.80 C372.40 648.80 375.20 648.70 378.00 648.70 C378.93 648.70 379.87 649.40 380.80 649.40 C383.13 649.40 385.47 647.30 387.80 647.30 C390.13 647.30 392.47 647.45 394.80 647.70 C396.67 647.90 398.53 649.94 400.40 650.50 C402.27 651.06 404.13 651.70 406.00 651.70 C408.10 651.70 410.20 648.86 412.30 648.70 C414.87 648.51 417.43 648.58 420.00 648.40 C421.40 648.30 422.80 647.40 424.20 647.40 C426.53 647.40 428.87 648.80 431.20 648.80 C433.07 648.80 434.93 647.70 436.80 647.70 C439.10 647.70 441.40 648.70 443.70 648.70 C446.03 648.70 448.37 648.70 450.70 648.70 C452.57 648.70 454.43 647.30 456.30 647.30 C458.63 647.30 460.97 651.18 463.30 651.90 C465.07 652.44 466.83 652.63 468.60 653.00" fill="none" stroke="#5b53e6" stroke-width="1.7" stroke-linejoin="round"/><path d="M798.7 550.7h10.7" stroke="#1ea5b8" stroke-width="2"/><path d="M866.5 550.7h10.5" stroke="#67c23a" stroke-width="2"/><path d="M922.9 543v14" stroke="#e3e3e3" stroke-width="1"/><path d="M932.5 548.6V545.5H935.6 M943.2 548.6V545.5H940.1 M943.1 545.6L939.5 549.2 M943.2 553.1V556.2H940.1 M932.5 553.1V556.2H935.6 M932.6 556.1L936.2 552.5" fill="none" stroke="#aaa" stroke-width="1"/><path d="M568.30 591.50 C572.20 591.50 576.10 591.50 580.00 591.50 C582.00 591.50 584.00 590.80 586.00 590.80 C588.00 590.80 590.00 591.50 592.00 591.50 C642.50 591.50 693.00 591.50 743.50 591.50 C745.47 591.50 747.43 599.40 749.40 599.40 C759.77 599.40 770.13 599.40 780.50 599.40 C784.33 599.40 788.17 596.50 792.00 596.50 C794.67 596.50 797.33 597.30 800.00 597.30 C806.00 597.30 812.00 597.30 818.00 597.30 C820.00 597.30 822.00 604.40 824.00 604.40 C841.13 604.40 858.27 604.40 875.40 604.40 C877.27 604.40 879.13 611.10 881.00 611.10 C902.00 611.10 923.00 611.10 944.00 611.10 L944.00 685 L568.30 685 Z" fill="#e6f2de"/><path d="M568.30 592.20 C625.03 592.20 681.77 592.20 738.50 592.20 C740.17 592.20 741.83 600.20 743.50 600.20 C749.00 600.20 754.50 599.78 760.00 599.20 C762.33 598.95 764.67 597.61 767.00 597.50 C774.67 597.14 782.33 597.00 790.00 597.00 C797.67 597.00 805.33 597.10 813.00 597.50 C815.00 597.61 817.00 605.00 819.00 605.00 C836.00 605.00 853.00 605.00 870.00 605.00 C871.67 605.00 873.33 612.00 875.00 612.00 C886.67 612.00 898.33 611.50 910.00 611.50 C915.00 611.50 920.00 612.20 925.00 612.20 C931.33 612.20 937.67 611.73 944.00 611.50 L944.00 685 L568.30 685 Z" fill="url(#g2)"/><path d="M568.3 579.7H944" stroke="rgba(0,0,0,0.1)" stroke-width="1" stroke-dasharray="3.5 1.3"/><path d="M564.3 579.7H568.3" stroke="#d5dbf3" stroke-width="1"/><path d="M568.3 632H944" stroke="rgba(0,0,0,0.1)" stroke-width="1" stroke-dasharray="3.5 1.3"/><path d="M564.3 632H568.3" stroke="#d5dbf3" stroke-width="1"/><path d="M568.3 579.7V685.5" stroke="#d5dbf3" stroke-width="1"/><path d="M564.3 685H944" stroke="#d5dbf3" stroke-width="1.5"/><path d="M586.4 685V690" stroke="#d5dbf3" stroke-width="1"/><path d="M681 685V690" stroke="#d5dbf3" stroke-width="1"/><path d="M774.4 685V690" stroke="#d5dbf3" stroke-width="1"/><path d="M868.3 685V690" stroke="#d5dbf3" stroke-width="1"/><path d="M568.30 592.20 C625.03 592.20 681.77 592.20 738.50 592.20 C740.17 592.20 741.83 600.20 743.50 600.20 C749.00 600.20 754.50 599.78 760.00 599.20 C762.33 598.95 764.67 597.61 767.00 597.50 C774.67 597.14 782.33 597.00 790.00 597.00 C797.67 597.00 805.33 597.10 813.00 597.50 C815.00 597.61 817.00 605.00 819.00 605.00 C836.00 605.00 853.00 605.00 870.00 605.00 C871.67 605.00 873.33 612.00 875.00 612.00 C886.67 612.00 898.33 611.50 910.00 611.50 C915.00 611.50 920.00 612.20 925.00 612.20 C931.33 612.20 937.67 611.73 944.00 611.50" fill="none" stroke="#1ea5b8" stroke-width="1.7" stroke-linejoin="round"/><path d="M568.30 591.50 C572.20 591.50 576.10 591.50 580.00 591.50 C582.00 591.50 584.00 590.80 586.00 590.80 C588.00 590.80 590.00 591.50 592.00 591.50 C642.50 591.50 693.00 591.50 743.50 591.50 C745.47 591.50 747.43 599.40 749.40 599.40 C759.77 599.40 770.13 599.40 780.50 599.40 C784.33 599.40 788.17 596.50 792.00 596.50 C794.67 596.50 797.33 597.30 800.00 597.30 C806.00 597.30 812.00 597.30 818.00 597.30 C820.00 597.30 822.00 604.40 824.00 604.40 C841.13 604.40 858.27 604.40 875.40 604.40 C877.27 604.40 879.13 611.10 881.00 611.10 C902.00 611.10 923.00 611.10 944.00 611.10" fill="none" stroke="#67c23a" stroke-width="1.7" stroke-linejoin="round"/><path d="M63.30 835.20 C89.20 835.20 115.10 835.20 141.00 835.20 C142.33 835.20 143.67 834.20 145.00 834.20 C195.93 834.20 246.87 835.80 297.80 835.80 C300.03 835.80 302.27 833.80 304.50 833.80 C327.73 833.80 350.97 833.80 374.20 833.80 C376.47 833.80 378.73 835.50 381.00 835.50 C383.50 835.50 386.00 835.50 388.50 835.50 C390.73 835.50 392.97 848.10 395.20 848.10 C397.43 848.10 399.67 837.04 401.90 836.30 C403.27 835.85 404.63 835.53 406.00 835.50 C416.13 835.25 426.27 835.43 436.40 835.20 C438.60 835.15 440.80 834.30 443.00 834.30 C454.60 834.30 466.20 834.30 477.80 834.30 L477.80 944.2 L63.30 944.2 Z" fill="#d4e4fb"/><path d="M63.30 854.30 C89.20 854.30 115.10 854.30 141.00 854.30 C142.33 854.30 143.67 853.00 145.00 853.00 C183.33 853.00 221.67 853.13 260.00 853.50 C267.83 853.58 275.67 854.29 283.50 854.50 C288.27 854.63 293.03 854.80 297.80 854.80 C300.03 854.80 302.27 852.80 304.50 852.80 C318.77 852.80 333.03 852.80 347.30 852.80 C349.53 852.80 351.77 853.50 354.00 853.50 C360.73 853.50 367.47 853.50 374.20 853.50 C376.47 853.50 378.73 855.20 381.00 855.20 C383.50 855.20 386.00 854.50 388.50 854.50 C390.73 854.50 392.97 864.90 395.20 864.90 C397.43 864.90 399.67 854.86 401.90 854.80 C427.20 854.07 452.50 854.27 477.80 854.00 L477.80 944.2 L63.30 944.2 Z" fill="url(#t4)"/><path d="M63.3 830H477.8" stroke="rgba(0,0,0,0.1)" stroke-width="1" stroke-dasharray="3.5 1.3"/><path d="M59.3 830H63.3" stroke="#d5dbf3" stroke-width="1"/><path d="M63.3 858.5H477.8" stroke="rgba(0,0,0,0.1)" stroke-width="1" stroke-dasharray="3.5 1.3"/><path d="M59.3 858.5H63.3" stroke="#d5dbf3" stroke-width="1"/><path d="M63.3 887.2H477.8" stroke="rgba(0,0,0,0.1)" stroke-width="1" stroke-dasharray="3.5 1.3"/><path d="M59.3 887.2H63.3" stroke="#d5dbf3" stroke-width="1"/><path d="M63.3 915.8H477.8" stroke="rgba(0,0,0,0.1)" stroke-width="1" stroke-dasharray="3.5 1.3"/><path d="M59.3 915.8H63.3" stroke="#d5dbf3" stroke-width="1"/><path d="M63.3 830V944.5" stroke="#d5dbf3" stroke-width="1"/><path d="M59.3 944.2H477.8" stroke="#d5dbf3" stroke-width="1.5"/><path d="M84 944.2V949" stroke="#d5dbf3" stroke-width="1"/><path d="M188 944.2V949" stroke="#d5dbf3" stroke-width="1"/><path d="M291.5 944.2V949" stroke="#d5dbf3" stroke-width="1"/><path d="M395.4 944.2V949" stroke="#d5dbf3" stroke-width="1"/><path d="M63.30 854.30 C89.20 854.30 115.10 854.30 141.00 854.30 C142.33 854.30 143.67 853.00 145.00 853.00 C183.33 853.00 221.67 853.13 260.00 853.50 C267.83 853.58 275.67 854.29 283.50 854.50 C288.27 854.63 293.03 854.80 297.80 854.80 C300.03 854.80 302.27 852.80 304.50 852.80 C318.77 852.80 333.03 852.80 347.30 852.80 C349.53 852.80 351.77 853.50 354.00 853.50 C360.73 853.50 367.47 853.50 374.20 853.50 C376.47 853.50 378.73 855.20 381.00 855.20 C383.50 855.20 386.00 854.50 388.50 854.50 C390.73 854.50 392.97 864.90 395.20 864.90 C397.43 864.90 399.67 854.86 401.90 854.80 C427.20 854.07 452.50 854.27 477.80 854.00" fill="none" stroke="#25a18e" stroke-width="1.7" stroke-linejoin="round"/><path d="M63.30 835.20 C89.20 835.20 115.10 835.20 141.00 835.20 C142.33 835.20 143.67 834.20 145.00 834.20 C195.93 834.20 246.87 835.80 297.80 835.80 C300.03 835.80 302.27 833.80 304.50 833.80 C327.73 833.80 350.97 833.80 374.20 833.80 C376.47 833.80 378.73 835.50 381.00 835.50 C383.50 835.50 386.00 835.50 388.50 835.50 C390.73 835.50 392.97 848.10 395.20 848.10 C397.43 848.10 399.67 837.04 401.90 836.30 C403.27 835.85 404.63 835.53 406.00 835.50 C416.13 835.25 426.27 835.43 436.40 835.20 C438.60 835.15 440.80 834.30 443.00 834.30 C454.60 834.30 466.20 834.30 477.80 834.30" fill="none" stroke="#1a6ff4" stroke-width="1.7" stroke-linejoin="round"/><path d="M558 830H973" stroke="rgba(0,0,0,0.1)" stroke-width="1" stroke-dasharray="3.5 1.3"/><path d="M554 830H558" stroke="#d5dbf3" stroke-width="1"/><path d="M558 858.5H973" stroke="rgba(0,0,0,0.1)" stroke-width="1" stroke-dasharray="3.5 1.3"/><path d="M554 858.5H558" stroke="#d5dbf3" stroke-width="1"/><path d="M558 887.2H973" stroke="rgba(0,0,0,0.1)" stroke-width="1" stroke-dasharray="3.5 1.3"/><path d="M554 887.2H558" stroke="#d5dbf3" stroke-width="1"/><path d="M558 915.8H973" stroke="rgba(0,0,0,0.1)" stroke-width="1" stroke-dasharray="3.5 1.3"/><path d="M554 915.8H558" stroke="#d5dbf3" stroke-width="1"/><path d="M579.3 944V949" stroke="#d5dbf3" stroke-width="1"/><path d="M682.7 944V949" stroke="#d5dbf3" stroke-width="1"/><path d="M786.4 944V949" stroke="#d5dbf3" stroke-width="1"/><path d="M890.1 944V949" stroke="#d5dbf3" stroke-width="1"/><path d="M558.5 944V830H627.5V887.2H697V830H766V944" fill="none" stroke="#e8a23a" stroke-width="1.8"/><path d="M558 944.2H973" stroke="#ee5a52" stroke-width="1.8"/><rect x="419.8" y="793.3" width="12" height="10.6" rx="1" fill="none" stroke="#8a8a8a" stroke-width="1"/><path d="M421.5 800.0999999999999L422.8 796.1999999999999L424.2 798.4H430.1" fill="none" stroke="#8a8a8a" stroke-width="0.9"/><path d="M424.3 800.8H430.1" stroke="#8a8a8a" stroke-width="1.2"/><path d="M457.6 796.1V793.0H460.70000000000005 M468.3 796.1V793.0H465.2 M468.2 793.1L464.6 796.7 M468.3 800.6V803.7H465.2 M457.6 800.6V803.7H460.70000000000005 M457.70000000000005 803.6L461.3 800.0" fill="none" stroke="#999" stroke-width="1"/><rect x="914.8" y="793.3" width="12" height="10.6" rx="1" fill="none" stroke="#8a8a8a" stroke-width="1"/><path d="M916.5 800.0999999999999L917.8 796.1999999999999L919.1999999999999 798.4H925.0999999999999" fill="none" stroke="#8a8a8a" stroke-width="0.9"/><path d="M919.3 800.8H925.0999999999999" stroke="#8a8a8a" stroke-width="1.2"/><path d="M952.8 796.1V793.0H955.9 M963.5 796.1V793.0H960.4 M963.4 793.1L959.8 796.7 M963.5 800.6V803.7H960.4 M952.8 800.6V803.7H955.9 M952.9 803.6L956.5 800.0" fill="none" stroke="#999" stroke-width="1"/><rect x="1041.7" y="735.5" width="12" height="10.6" rx="1" fill="none" stroke="#8a8a8a" stroke-width="1"/><path d="M1043.4 742.3L1044.7 738.4L1046.1000000000001 740.6H1052.0" fill="none" stroke="#8a8a8a" stroke-width="0.9"/><path d="M1046.2 743H1052.0" stroke="#8a8a8a" stroke-width="1.2"/><path d="M1042.1 831.4V828.3H1045.1999999999998 M1052.8 831.4V828.3H1049.7 M1052.7 828.4L1049.1 832.0 M1052.8 835.9V839.0H1049.7 M1042.1 835.9V839.0H1045.1999999999998 M1042.1999999999998 838.9L1045.8 835.3" fill="none" stroke="#999" stroke-width="1"/></svg>
<div class="r" style="left:971px;top:897px;width:36px;height:36px;background:#fff;border-radius:3px;box-shadow:0 1px 5px rgba(0,0,0,0.13)"></div>
<div class="r" style="left:971px;top:937px;width:36px;height:36px;background:#fff;border-radius:3px;box-shadow:0 1px 5px rgba(0,0,0,0.13)"></div>
<svg class="ov" width="1429" height="991" viewBox="0 0 1429 991">
<path d="M991.15 907.57 A7.6 7.6 0 1 0 994.45 919.89" fill="none" stroke="#999" stroke-width="1.9"/>
<path d="M992.2 912.4 L998 906.6 L998 912.4 Z" fill="#999" stroke="#999" stroke-width="0.9" stroke-linejoin="round"/>
<path d="M987.17 949.03 L987.75 946.16 L989.85 946.16 L990.43 949.03 L991.66 949.54 L994.09 947.92 L995.58 949.41 L993.96 951.84 L994.47 953.07 L997.34 953.65 L997.34 955.75 L994.47 956.33 L993.96 957.56 L995.58 959.99 L994.09 961.48 L991.66 959.86 L990.43 960.37 L989.85 963.24 L987.75 963.24 L987.17 960.37 L985.94 959.86 L983.51 961.48 L982.02 959.99 L983.64 957.56 L983.13 956.33 L980.26 955.75 L980.26 953.65 L983.13 953.07 L983.64 951.84 L982.02 949.41 L983.51 947.92 L985.94 949.54Z" fill="#0f6ef5" stroke="#0f6ef5" stroke-width="0.9" stroke-linejoin="round"/>
<circle cx="988.8" cy="954.7" r="2.6" fill="#fff"/>
<path d="M1006.5 968 L1006.5 972.5 L1002 972.5 Z" fill="#2a7af5"/>
</svg>
</body></html>
